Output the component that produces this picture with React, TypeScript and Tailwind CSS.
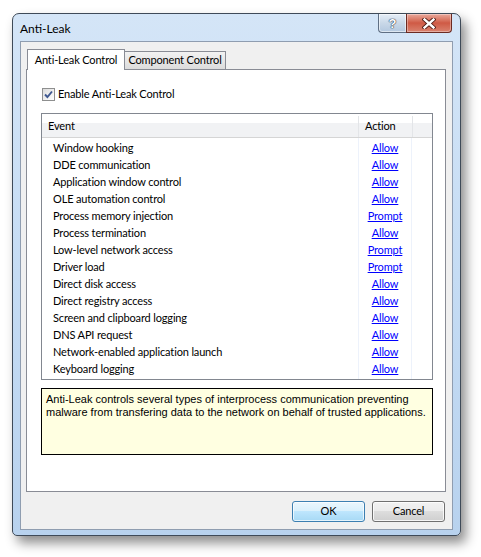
import React from "react";

const events: [string, string][] = [
  ["Window hooking", "Allow"],
  ["DDE communication", "Allow"],
  ["Application window control", "Allow"],
  ["OLE automation control", "Allow"],
  ["Process memory injection", "Prompt"],
  ["Process termination", "Allow"],
  ["Low-level network access", "Prompt"],
  ["Driver load", "Prompt"],
  ["Direct disk access", "Allow"],
  ["Direct registry access", "Allow"],
  ["Screen and clipboard logging", "Allow"],
  ["DNS API request", "Allow"],
  ["Network-enabled application launch", "Allow"],
  ["Keyboard logging", "Allow"],
];

function CaptionButtons() {
  return (
    <div className="flex h-[19px] items-stretch">
      <div className="flex w-[28px] items-center justify-center rounded-bl-[4px] border border-t-0 border-r-0 border-[#5f6f84] bg-gradient-to-b from-[#e6eef7] via-[#c9d8e8] to-[#b3c8df] shadow-[inset_0_0_0_1px_rgba(255,255,255,0.55)]">
        <span className="text-[13px] font-bold leading-none text-white [font-family:'Liberation_Sans',sans-serif] [text-shadow:0_0_1px_#2c3b4f,0_0_1px_#2c3b4f,0_0_1px_#2c3b4f]">
          ?
        </span>
      </div>
      <div className="flex w-[46px] items-center justify-center rounded-br-[4px] border border-t-0 border-[#6b2a22] bg-gradient-to-b from-[#e9a99c] via-[#cf5a45] to-[#d9826f] shadow-[inset_0_0_0_1px_rgba(255,255,255,0.35)]">
        <svg width="14" height="11" viewBox="0 0 14 11">
          <path d="M2.5 1.5 L11.5 9.5 M11.5 1.5 L2.5 9.5" stroke="#4a1710" strokeWidth="4.2" strokeLinecap="square" />
          <path d="M2.5 1.5 L11.5 9.5 M11.5 1.5 L2.5 9.5" stroke="#ffffff" strokeWidth="2.4" strokeLinecap="square" />
        </svg>
      </div>
    </div>
  );
}

function CheckBox() {
  return (
    <div className="flex h-[13px] w-[13px] items-center justify-center border border-[#8e8f8f] bg-gradient-to-br from-[#dcdcdc] to-[#ffffff]">
      <svg width="11" height="11" viewBox="0 0 11 11">
        <path d="M2 5.5 L4.4 8 L9 2.5" fill="none" stroke="#3f5890" strokeWidth="1.9" />
      </svg>
    </div>
  );
}

function EventList() {
  return (
    <div className="flex h-[267px] w-[392px] flex-col border border-[#828790] bg-white">
      <div className="flex h-[24px] border-b border-[#d5d5d5] bg-[linear-gradient(to_bottom,#ffffff_0%,#ffffff_40%,#f1f2f4_41%,#f1f2f4_100%)] pt-[2px] text-black">
        <div className="flex w-[316px] items-center pl-[6px]">Event</div>
        <div className="flex w-[54px] items-center border-l border-[#e3e5e8] pl-[6px]">Action</div>
        <div className="flex-1 border-l border-[#e3e5e8]" />
      </div>
      <div className="flex flex-1 pt-[2px]">
        <div className="w-[316px]">
          {events.map(([name]) => (
            <div key={name} className="flex h-[17px] items-center whitespace-nowrap pl-[11px] text-black">
              {name}
            </div>
          ))}
        </div>
        <div className="-mt-[2px] w-[54px] border-x border-[#edf2fb] pt-[2px]">
          {events.map(([name, action]) => (
            <div key={name} className="flex h-[17px] items-center justify-center text-[#0000ff] underline">
              {action}
            </div>
          ))}
        </div>
      </div>
    </div>
  );
}

function Button({ label, primary }: { label: string; primary?: boolean }) {
  return (
    <div
      className={
        primary
          ? "flex h-[21px] w-[73px] items-center justify-center rounded-[3px] border border-[#3c7fb1] bg-[linear-gradient(to_bottom,#eaf6fd_0%,#d9f0fc_48%,#bee6fd_50%,#a7d9f5_100%)] text-black shadow-[inset_0_0_0_1px_rgba(255,255,255,0.7)]"
          : "flex h-[21px] w-[73px] items-center justify-center rounded-[3px] border border-[#707070] bg-[linear-gradient(to_bottom,#f2f2f2_0%,#ebebeb_48%,#dddddd_50%,#cfcfcf_100%)] text-black shadow-[inset_0_0_0_1px_rgba(255,255,255,0.8)]"
      }
    >
      {label}
    </div>
  );
}

export default function App() {
  return (
    <div className="h-[557px] w-[481px] bg-white pl-[12px] pt-[13px] text-[11px] tracking-[-0.15px] [font-family:Lato,'Noto_Sans',sans-serif]">
      <div className="flex h-[523px] w-[449px] flex-col rounded-t-[7px] rounded-b-[5px] border border-[#3e4a58] bg-gradient-to-b from-[#d4e5f7] via-[#c5dcf4] to-[#b8d2ee] shadow-[5px_7px_12px_rgba(0,0,0,0.45)]">
        <div className="flex h-[27px] items-start justify-between pl-[7px] pr-[8px]">
          <span className="pt-[6px] text-[12px] tracking-normal text-black">Anti-Leak</span>
          <CaptionButtons />
        </div>

        <div className="mx-[7px] flex h-[489px] flex-col border border-[#8f9db0] bg-[#f0f0f0]">
          <div className="ml-[5px] mt-[7px] flex flex-col">
            <div className="flex h-[20px] items-end pl-[1px]">
              <div className="relative z-10 -mb-px flex h-[21px] w-[98px] items-start justify-center whitespace-nowrap border border-b-0 border-[#898c95] bg-white pt-[2px] text-black">
                Anti-Leak Control
              </div>
              <div className="flex h-[18px] w-[101px] items-center justify-center whitespace-nowrap border border-b-0 border-l-0 border-[#898c95] bg-gradient-to-b from-[#f2f2f2] to-[#dcdcdc] text-black">
                Component Control
              </div>
            </div>
            <div className="flex h-[423px] w-[420px] flex-col border border-[#898c95] bg-white pl-[14px]">
              <div className="mt-[16px] flex items-center gap-[3px] pl-[1px]">
                <CheckBox />
                <span className="text-black">Enable Anti-Leak Control</span>
              </div>
              <div className="mt-[10px]">
                <EventList />
              </div>
              <div className="mt-[8px] h-[67px] w-[392px] border border-black bg-[#ffffe1] px-[4px] pt-[4px] text-[11px] leading-[13px] tracking-normal text-black [font-family:'Liberation_Sans',Arial,sans-serif]">
                Anti-Leak controls several types of interprocess communication preventing malware from transfering data to the network on behalf of trusted applications.
              </div>
            </div>
          </div>
          <div className="mr-[7px] mt-[9px] flex justify-end gap-[7px]">
            <Button label="OK" primary />
            <Button label="Cancel" />
          </div>
        </div>
      </div>
    </div>
  );
}
